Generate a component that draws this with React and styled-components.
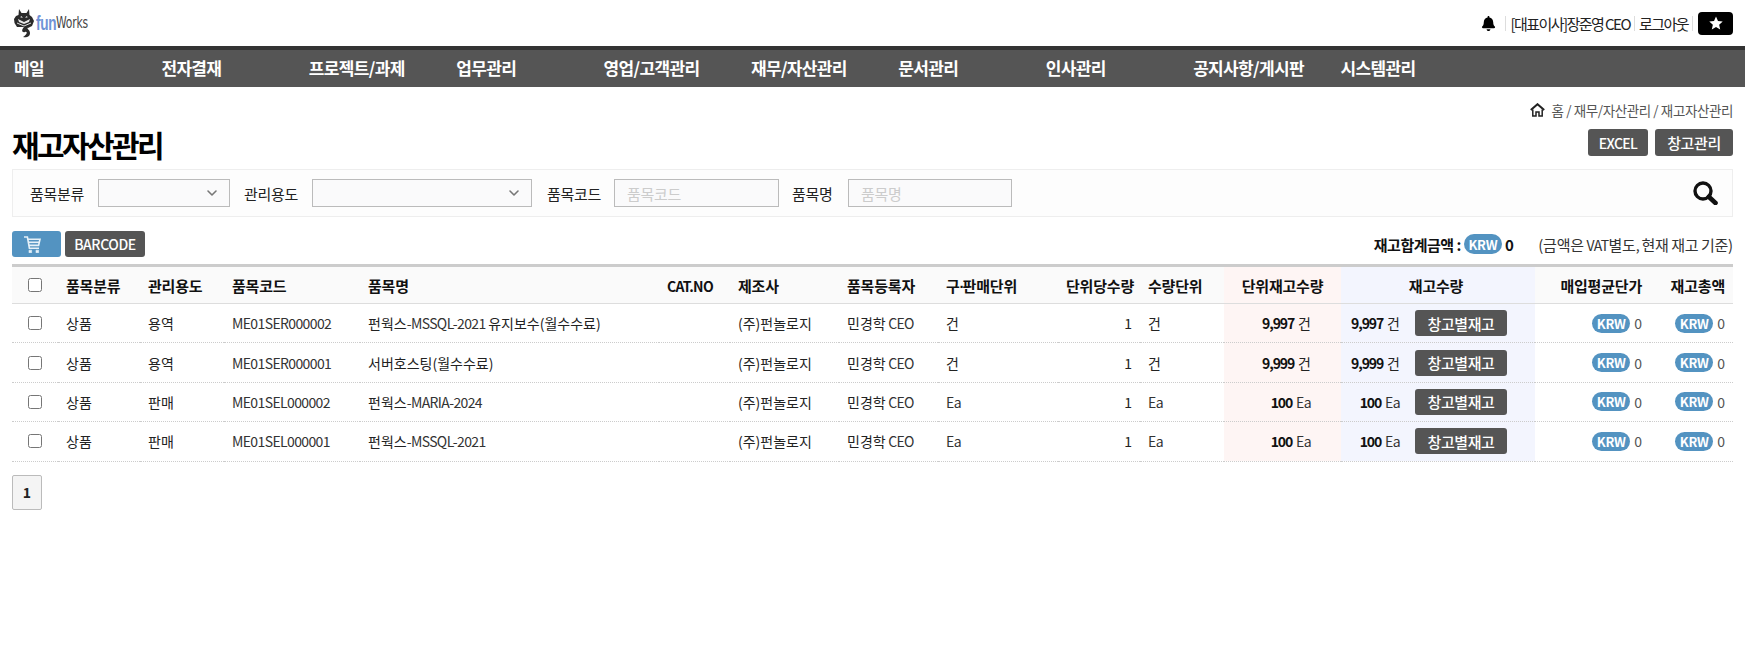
import React from 'react';
import styled, { createGlobalStyle } from 'styled-components';
import { ChevronDown } from 'lucide-react';
import { FaBell } from 'react-icons/fa';

const FONT = '"Noto Sans CJK KR", "Noto Sans", "Liberation Sans", sans-serif';
const BLUE = '#5393c1';
const DARK = '#555';

const Global = createGlobalStyle`
  html, body { margin: 0; padding: 0; background: #fff; }
  body { font-family: ${FONT}; font-size: 14px; color: #222; letter-spacing: -0.1px; }
  * { box-sizing: border-box; }
`;

const TopBar = styled.header`
  height: 46px;
  display: flex;
  align-items: center;
  justify-content: space-between;
  padding: 0 12px 0 14px;
`;
const LogoWrap = styled.div`
  display: flex;
  align-items: center;
`;
const LogoFun = styled.span`
  font: bold 20px/1 "Liberation Sans", sans-serif;
  color: #6f93d6;
  letter-spacing: -0.4px;
  margin-left: 2px;
  width: 20px;
  transform: scaleX(0.68);
  transform-origin: left;
`;
const LogoWorks = styled.span`
  font: 15px/1 "DejaVu Sans", sans-serif;
  color: #444;
  letter-spacing: -0.3px;
  width: 33px;
  transform: scaleX(0.72);
  transform-origin: left;
`;
const UserBox = styled.div`
  display: flex;
  align-items: center;
  font-size: 15px;
  letter-spacing: -1.55px;
  color: #222;
`;
const Sep = styled.i`
  width: 1px;
  height: 15px;
  background: #ddd;
  margin: 0 4px 0 ${p => p.$l || 4}px;
`;
const StarBtn = styled.button`
  width: 35px;
  height: 23px;
  border: 0;
  border-radius: 4px;
  background: #000;
  display: flex;
  align-items: center;
  justify-content: center;
  padding: 0;
  margin-left: 1px;
`;
const Nav = styled.nav`
  height: 41px;
  border-top: 4px solid #333;
  background: ${DARK};
  display: grid;
  grid-template-columns: repeat(10, 147.4px);
  align-items: center;
  padding-bottom: 2px;
`;
const NavItem = styled.a`
  padding-left: 14px;
  color: #fff;
  font-size: 17px;
  font-weight: 700;
  letter-spacing: -0.65px;
  white-space: nowrap;
`;
const Main = styled.main`
  padding: 14px 12px 0;
`;
const Crumb = styled.div`
  height: 18px;
  display: flex;
  align-items: center;
  justify-content: flex-end;
  gap: 7px;
  font-size: 13.5px;
  letter-spacing: -0.4px;
  color: #555;
`;
const TitleRow = styled.div`
  height: 50px;
  padding-top: 10px;
  display: flex;
  justify-content: space-between;
`;
const Title = styled.h1`
  margin: -5px 0 0;
  font-size: 30px;
  line-height: 40px;
  font-weight: 700;
  letter-spacing: -2.6px;
  color: #000;
`;
const Btns = styled.div`
  display: flex;
  gap: 7px;
`;
const DarkBtn = styled.button`
  height: ${p => p.$h || 27}px;
  width: ${p => p.$w}px;
  border: 0;
  border-radius: 3px;
  background: ${DARK};
  color: #fff;
  padding: 0;
  font-family: ${FONT};
  font-size: ${p => p.$fs || 15}px;
  font-weight: 500;
  letter-spacing: ${p => p.$ls || -0.4}px;
`;
const SearchBox = styled.div`
  height: 48px;
  border: 1px solid #eee;
  background: #fdfdfd;
  display: flex;
  align-items: center;
  padding-left: 17px;
`;
const Label = styled.label`
  width: ${p => p.$w}px;
  font-size: 15px;
  letter-spacing: -0.3px;
  color: #222;
`;
const SelectBox = styled.div`
  width: ${p => p.$w}px;
  height: 28px;
  border: 1px solid #bbb;
  background: #fafafb;
  display: flex;
  align-items: center;
  justify-content: flex-end;
  padding-right: 9px;
  margin-right: ${p => p.$mr}px;
  color: #777;
`;
const FakeInput = styled.input`
  width: ${p => p.$w}px;
  height: 28px;
  border: 1px solid #bbb;
  background: #fafafb;
  padding: 0 12px;
  margin-right: ${p => p.$mr}px;
  font-family: ${FONT};
  font-size: 15px;
  letter-spacing: -0.3px;
  &::placeholder { color: #ccc; }
`;
const SearchIcon = styled.div`
  margin-left: auto;
  margin-right: 14px;
  display: flex;
`;
const Tools = styled.div`
  height: 26px;
  margin: 14px 0 7px;
  display: flex;
  align-items: center;
  gap: 4px;
`;
const CartBtn = styled.button`
  width: 49px;
  height: 26px;
  border: 0;
  border-radius: 3px;
  background: ${BLUE};
  display: flex;
  align-items: center;
  padding: 0 0 0 12px;
`;
const Totals = styled.div`
  margin-left: auto;
  display: flex;
  align-items: center;
  gap: 3px;
`;
const TotalLabel = styled.b`
  font-size: 15px;
  font-weight: 700;
  letter-spacing: -0.5px;
  color: #111;
`;
const TotalNote = styled.span`
  margin-left: 22px;
  font-size: 15px;
  letter-spacing: -0.2px;
  color: #333;
`;
const Pill = styled.span`
  display: inline-flex;
  align-items: center;
  justify-content: center;
  width: ${p => p.$w || 38}px;
  height: ${p => p.$h || 19}px;
  border-radius: 10px;
  background: ${BLUE};
  color: #fff;
  font-size: 13px;
  font-weight: 700;
  letter-spacing: -0.3px;
`;
const Table = styled.table`
  width: 1721px;
  table-layout: fixed;
  border-collapse: collapse;
  border-top: 3px solid #ccc;
`;
const Th = styled.th`
  height: 38px;
  padding: 0 ${p => p.$pr || 8}px 0 8px;
  font-size: 15px;
  font-weight: 700;
  letter-spacing: -0.2px;
  color: #111;
  white-space: nowrap;
  text-align: ${p => p.$align || 'left'};
  background: ${p => p.$bg || '#fafafa'};
  border-bottom: 1px solid #ddd;
`;
const Td = styled.td`
  height: 39.4px;
  padding: 0 ${p => p.$pr || 8}px 0 8px;
  font-size: 14px;
  letter-spacing: 0;
  color: #222;
  white-space: nowrap;
  text-align: ${p => p.$align || 'left'};
  background: ${p => p.$bg || 'transparent'};
  border-bottom: 1px dotted #ccc;
`;
const Latin = styled.span`
  font-size: 14px;
  letter-spacing: -0.62px;
  color: #333;
`;
const HeadLatin = styled(Latin)`
  color: #111;
`;
const MidDot = styled.span`
  font-family: "Liberation Sans", sans-serif;
  letter-spacing: -2px;
`;
const Check = styled.input.attrs({ type: 'checkbox' })`
  display: block;
  width: 14px;
  height: 14px;
  margin: 0 0 0 16px;
`;
const CheckTh = styled(Th)`
  padding: 0;
`;
const CheckTd = styled(Td)`
  padding: 0;
`;
const Qty = styled.b`
  font-size: 14px;
  font-weight: 700;
  color: #111;
  letter-spacing: -1.1px;
  margin-right: 4px;
`;
const StockCell = styled.div`
  display: flex;
  align-items: center;
  justify-content: flex-end;
  gap: 15px;
`;
const MoneyCell = styled.div`
  display: flex;
  align-items: center;
  justify-content: flex-end;
  gap: 4px;
  color: #555;
`;
const PageBtn = styled.button`
  display: block;
  width: 30px;
  height: 35px;
  margin-top: 13px;
  border: 1px solid #bbb;
  border-radius: 2px;
  background: #f4f4f4;
  padding: 0;
  font-family: ${FONT};
  font-size: 14px;
  font-weight: 700;
  color: #222;
`;

const PINK = '#fef5f4';
const LAV = '#f3f5fe';

const menus = ['메일', '전자결재', '프로젝트/과제', '업무관리', '영업/고객관리', '재무/자산관리', '문서관리', '인사관리', '공지사항/게시판', '시스템관리'];
const widths = [46, 82, 84, 136, 299, 71, 109, 99, 120, 82, 84, 117, 194, 115, 83];
const rows = [
  { use: '용역', code: 'ME01SER000002', name: '펀웍스-MSSQL-2021 유지보수(월수수료)', unit: '건', qty: '9,997' },
  { use: '용역', code: 'ME01SER000001', name: '서버호스팅(월수수료)', unit: '건', qty: '9,999' },
  { use: '판매', code: 'ME01SEL000002', name: '펀웍스-MARIA-2024', unit: 'Ea', qty: '100' },
  { use: '판매', code: 'ME01SEL000001', name: '펀웍스-MSSQL-2021', unit: 'Ea', qty: '100' },
];

// 영문/숫자 구간만 자간을 좁힌다
function Mixed({ text }) {
  return text.split(/([A-Za-z0-9.,\-\s]+)/).map((part, i) =>
    i % 2 ? <Latin key={i}>{part}</Latin> : part
  );
}

function Logo() {
  return (
    <LogoWrap>
      <svg width="20" height="31" viewBox="0 0 20 31">
        <path d="M5 1 L7.5 5 H12.5 L15 1 L15.5 7 L18 9 L20 13 L18 18 L14 20 L9 19 L3 19 L0.5 15 L0 11 L2 8 L4.5 7 Z" fill="#2b2b2b" />
        <path d="M4 11 L10 14 L16 11 L15 14 L10 16 L5 14 Z" fill="#e8e8e8" />
        <path d="M3 15 L10 18 L17 15" fill="none" stroke="#ddd" strokeWidth="1" />
        <path d="M7 8 L9 9.5 L6.5 9.5 Z M13 8 L11 9.5 L13.5 9.5 Z" fill="#fff" />
        <path d="M10 19 C7 22 8 25 11 24 C14 23 13 27 9 29 C12 30 16 29 16 25 C16 22 13 21 13 19 Z" fill="#2b2b2b" />
      </svg>
      <LogoFun>fun</LogoFun>
      <LogoWorks>Works</LogoWorks>
    </LogoWrap>
  );
}

function StarIcon() {
  return (
    <svg width="14" height="14" viewBox="0 0 24 24">
      <path d="M12 1 L15.4 8.6 L23.5 9.4 L17.4 14.9 L19.2 23 L12 18.8 L4.8 23 L6.6 14.9 L0.5 9.4 L8.6 8.6 Z" fill="#fff" />
    </svg>
  );
}

function HomeIcon() {
  return (
    <svg width="15" height="14" viewBox="0 0 15 14" fill="none" stroke="#222">
      <path d="M0.8 7 L7.5 1.2 L14.2 7" strokeWidth="2" />
      <path d="M2.8 6.5 V13 H6 V9 H9 V13 H12.2 V6.5" strokeWidth="1.5" />
    </svg>
  );
}

function SearchGlyph() {
  return (
    <svg width="25" height="24" viewBox="0 0 25 24" fill="none" stroke="#111">
      <circle cx="10" cy="10" r="8" strokeWidth="3.4" />
      <path d="M15.8 15.8 L22.5 22" strokeWidth="4.6" strokeLinecap="round" />
    </svg>
  );
}

function CartIcon() {
  return (
    <svg width="17" height="17" viewBox="0 0 17 17" fill="none" stroke="#e6f1f8" strokeWidth="1.6">
      <path d="M0 1 H3.4 L5.4 12.2 H15" />
      <path d="M3.8 3.2 H16 L14.6 9.4 H4.9" />
      <path d="M4.4 6.3 H15.2" />
      <path d="M5 14.2 H7.6 V16.8 H5 Z M12 14.2 H14.6 V16.8 H12 Z" fill="#e6f1f8" strokeWidth="0.6" />
    </svg>
  );
}

export default function App() {
  return (
    <>
      <Global />
      <TopBar>
        <Logo />
        <UserBox>
          <FaBell size={15} color="#000" />
          <Sep $l={9} />
          <span>[대표이사]장준영 CEO</span>
          <Sep />
          <span>로그아웃</span>
          <Sep />
          <StarBtn><StarIcon /></StarBtn>
        </UserBox>
      </TopBar>
      <Nav>
        {menus.map(m => <NavItem key={m}>{m}</NavItem>)}
      </Nav>
      <Main>
        <Crumb>
          <HomeIcon />
          <span>홈 / 재무/자산관리 / 재고자산관리</span>
        </Crumb>
        <TitleRow>
          <Title>재고자산관리</Title>
          <Btns>
            <DarkBtn $w={60} $fs={14} $ls={-0.6}>EXCEL</DarkBtn>
            <DarkBtn $w={78}>창고관리</DarkBtn>
          </Btns>
        </TitleRow>
        <SearchBox>
          <Label $w={68}>품목분류</Label>
          <SelectBox $w={132} $mr={14}><ChevronDown size={16} strokeWidth={2.4} /></SelectBox>
          <Label $w={68}>관리용도</Label>
          <SelectBox $w={220} $mr={15}><ChevronDown size={16} strokeWidth={2.4} /></SelectBox>
          <Label $w={67}>품목코드</Label>
          <FakeInput $w={165} $mr={13} placeholder="품목코드" readOnly />
          <Label $w={56}>품목명</Label>
          <FakeInput $w={164} $mr={0} placeholder="품목명" readOnly />
          <SearchIcon><SearchGlyph /></SearchIcon>
        </SearchBox>
        <Tools>
          <CartBtn><CartIcon /></CartBtn>
          <DarkBtn $w={80} $h={26} $fs={14} $ls={-0.4}>BARCODE</DarkBtn>
          <Totals>
            <TotalLabel>재고합계금액 :</TotalLabel>
            <Pill $h={20}>KRW</Pill>
            <TotalLabel>0</TotalLabel>
            <TotalNote><Mixed text="(금액은 VAT별도, 현재 재고 기준)" /></TotalNote>
          </Totals>
        </Tools>
        <Table>
          <colgroup>
            {widths.map((w, i) => <col key={i} style={{ width: w }} />)}
          </colgroup>
          <thead>
            <tr>
              <CheckTh><Check /></CheckTh>
              <Th>품목분류</Th>
              <Th>관리용도</Th>
              <Th>품목코드</Th>
              <Th>품목명</Th>
              <Th><HeadLatin>CAT.NO</HeadLatin></Th>
              <Th>제조사</Th>
              <Th>품목등록자</Th>
              <Th>구<MidDot>·</MidDot>판매단위</Th>
              <Th $align="right">단위당수량</Th>
              <Th>수량단위</Th>
              <Th $align="center" $bg={PINK}>단위재고수량</Th>
              <Th $align="center" $bg={LAV} $pr={12}>재고수량</Th>
              <Th $align="right">매입평균단가</Th>
              <Th $align="right">재고총액</Th>
            </tr>
          </thead>
          <tbody>
            {rows.map(r => (
              <tr key={r.code}>
                <CheckTd><Check /></CheckTd>
                <Td>상품</Td>
                <Td>{r.use}</Td>
                <Td><Mixed text={r.code} /></Td>
                <Td><Mixed text={r.name} /></Td>
                <Td />
                <Td>(주)펀놀로지</Td>
                <Td><Mixed text="민경학 CEO" /></Td>
                <Td><Mixed text={r.unit} /></Td>
                <Td $align="right">1</Td>
                <Td><Mixed text={r.unit} /></Td>
                <Td $align="right" $bg={PINK} $pr={30}><Qty>{r.qty}</Qty><Mixed text={r.unit} /></Td>
                <Td $bg={LAV} $pr={28}>
                  <StockCell>
                    <span><Qty>{r.qty}</Qty><Mixed text={r.unit} /></span>
                    <DarkBtn $w={92} $h={26}>창고별재고</DarkBtn>
                  </StockCell>
                </Td>
                <Td><MoneyCell><Pill>KRW</Pill>0</MoneyCell></Td>
                <Td><MoneyCell><Pill>KRW</Pill>0</MoneyCell></Td>
              </tr>
            ))}
          </tbody>
        </Table>
        <PageBtn>1</PageBtn>
      </Main>
    </>
  );
}
